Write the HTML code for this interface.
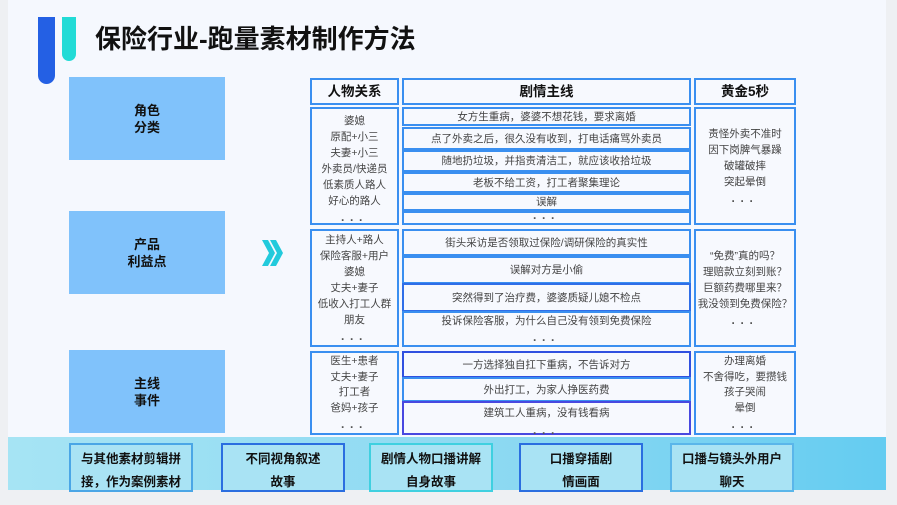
<!DOCTYPE html><html><head><meta charset="utf-8"><style>
*{margin:0;padding:0;box-sizing:border-box}
body{width:897px;height:505px;background:#eef0f3;position:relative;overflow:hidden;font-family:"Liberation Sans","Noto Sans CJK SC",sans-serif;color:#333}
.bg{position:absolute;left:8px;top:0;width:878px;height:490px;background:#f5f8fe}
.a{position:absolute}
.lb{position:absolute;left:69px;width:156px;background:#80c2fb;display:flex;align-items:center;justify-content:center;text-align:center;font-weight:bold;font-size:13px;line-height:17px;color:#111}
.c{position:absolute;border:2px solid #3a8ff0;background:#f7f9fe;display:flex;flex-direction:column;align-items:center;justify-content:center;text-align:center;font-size:10.5px;line-height:16px;color:#444}
.h{font-weight:bold;font-size:13.5px;color:#111}
.dots{letter-spacing:5px;font-size:12px;line-height:10px;font-weight:bold;color:#555}
.bb{position:absolute;top:443px;width:124px;height:49px;border:2px solid #4aa6e6;background:#a9e3f4;font-weight:bold;font-size:12.5px;line-height:23px;text-align:center;color:#111;padding-top:3px}
</style></head><body>
<div class="bg"></div>
<div class="a" style="left:38px;top:17px;width:17px;height:67px;background:#2460e4;border-radius:0 0 9px 9px"></div>
<div class="a" style="left:62px;top:17px;width:14px;height:44px;background:#22dbd6;border-radius:0 0 7px 7px"></div>
<div class="a" style="left:95px;top:22px;font-size:26px;font-weight:bold;color:#111;line-height:34px">保险行业-跑量素材制作方法</div>
<div class="lb" style="top:77px;height:83px">角色<br>分类</div>
<div class="lb" style="top:211px;height:83px">产品<br>利益点</div>
<div class="lb" style="top:350px;height:83px">主线<br>事件</div>
<svg class="a" style="left:261px;top:239px" width="22" height="28" viewBox="0 0 22 28"><path d="M1 1h6l7 13-7 13H1l7-13z M9 1h6l7 13-7 13H9l7-13z" fill="#22cadc"/></svg>
<div class="c h" style="left:310px;top:78px;width:89px;height:27px">人物关系</div>
<div class="c h" style="left:402px;top:78px;width:289px;height:27px">剧情主线</div>
<div class="c h" style="left:694px;top:78px;width:102px;height:27px">黄金5秒</div>
<div class="c" style="left:310px;top:107px;width:89px;height:118px;padding-top:6px">婆媳<br>原配+小三<br>夫妻+小三<br>外卖员/快递员<br>低素质人路人<br>好心的路人<br><span class="dots" style="margin-top:6px">···</span></div>
<div class="c" style="left:402px;top:107px;width:289px;height:19px">女方生重病，婆婆不想花钱，要求离婚</div>
<div class="c" style="left:402px;top:127px;width:289px;height:23px">点了外卖之后，很久没有收到，打电话痛骂外卖员</div>
<div class="c" style="left:402px;top:150px;width:289px;height:22px">随地扔垃圾，并指责清洁工，就应该收拾垃圾</div>
<div class="c" style="left:402px;top:172px;width:289px;height:21px">老板不给工资，打工者聚集理论</div>
<div class="c" style="left:402px;top:193px;width:289px;height:18px">误解</div>
<div class="c" style="left:402px;top:211px;width:289px;height:14px"><span class="dots">···</span></div>
<div class="c" style="left:694px;top:107px;width:102px;height:118px">责怪外卖不准时<br>因下岗脾气暴躁<br>破罐破摔<br>突起晕倒<br><span class="dots" style="margin-top:6px">···</span></div>
<div class="c" style="left:310px;top:229px;width:89px;height:118px">主持人+路人<br>保险客服+用户<br>婆媳<br>丈夫+妻子<br>低收入打工人群<br>朋友<br><span class="dots" style="margin-top:6px">···</span></div>
<div class="c" style="left:402px;top:229px;width:289px;height:27px">街头采访是否领取过保险/调研保险的真实性</div>
<div class="c" style="left:402px;top:256px;width:289px;height:28px">误解对方是小偷</div>
<div class="c" style="left:402px;top:283px;width:289px;height:29px;border-color:#2f6ee8">突然得到了治疗费，婆婆质疑儿媳不检点</div>
<div class="c" style="left:402px;top:311px;width:289px;height:36px">投诉保险客服，为什么自己没有领到免费保险<span class="dots" style="margin-top:6px">···</span></div>
<div class="c" style="left:694px;top:229px;width:102px;height:118px">“免费”真的吗？<br>理赔款立刻到账？<br>巨额药费哪里来？<br>我没领到免费保险？<br><span class="dots" style="margin-top:6px">···</span></div>
<div class="c" style="left:310px;top:351px;width:89px;height:84px;line-height:15.5px">医生+患者<br>丈夫+妻子<br>打工者<br>爸妈+孩子<br><span class="dots" style="margin-top:6px">···</span></div>
<div class="c" style="left:402px;top:351px;width:289px;height:27px;border-color:#3050e0">一方选择独自扛下重病，不告诉对方</div>
<div class="c" style="left:402px;top:377px;width:289px;height:25px">外出打工，为家人挣医药费</div>
<div class="c" style="left:402px;top:401px;width:289px;height:34px;border-color:#4848e0;justify-content:flex-start;padding-top:2px">建筑工人重病，没有钱看病<span class="dots" style="margin-top:7px">···</span></div>
<div class="c" style="left:694px;top:351px;width:102px;height:84px;line-height:15.5px">办理离婚<br>不舍得吃，要攒钱<br>孩子哭闹<br>晕倒<br><span class="dots" style="margin-top:6px">···</span></div>
<div class="a" style="left:8px;top:437px;width:878px;height:53px;background:linear-gradient(90deg,#a6e4f4,#8ad8f2 60%,#64ccf1)"></div>
<div class="bb" style="left:69px">与其他素材剪辑拼<br>接，作为案例素材</div>
<div class="bb" style="left:221px;border-color:#2a6ee0">不同视角叙述<br>故事</div>
<div class="bb" style="left:369px;border-color:#3fd0e0">剧情人物口播讲解<br>自身故事</div>
<div class="bb" style="left:519px;border-color:#2a6ee0">口播穿插剧<br>情画面</div>
<div class="bb" style="left:670px;border-color:#5ab6ea">口播与镜头外用户<br>聊天</div>
</body></html>
